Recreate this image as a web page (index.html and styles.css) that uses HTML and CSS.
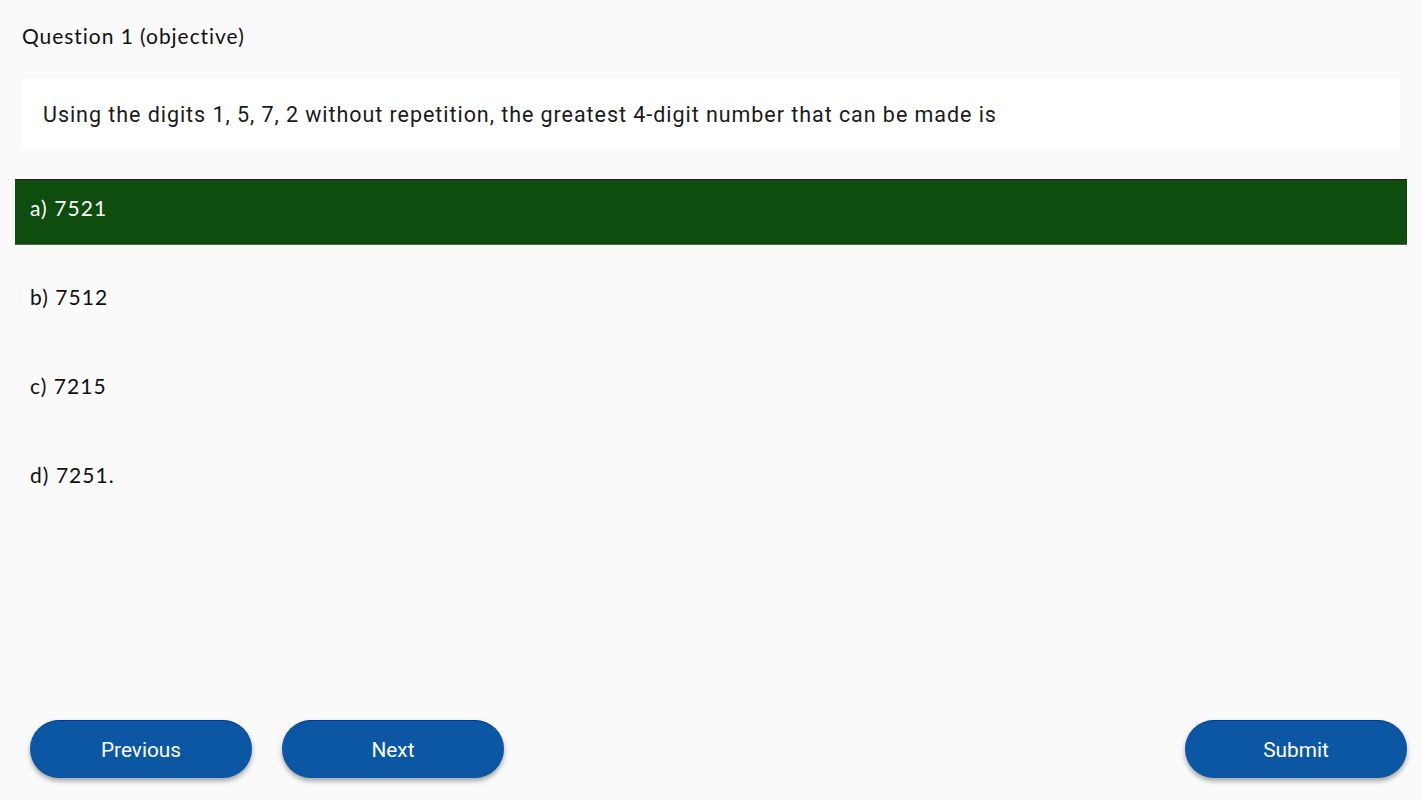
FILE: index.html
```html
<!DOCTYPE html>
<html lang="en">
<head>
<meta charset="utf-8">
<title>Question 1</title>
<link rel="stylesheet" href="styles.css">
</head>
<body>
<div class="page">
  <div class="main">
    <div class="qtitle">Question 1 (objective)</div>
    <div class="qcard">Using the digits 1, 5, 7, 2 without repetition, the greatest 4-digit number that can be made is</div>
    <div class="options">
      <div class="option selected">a) 7521</div>
      <div class="option">b) 7512</div>
      <div class="option">c) 7215</div>
      <div class="option">d) 7251.</div>
    </div>
  </div>
  <div class="actions">
    <div class="nav">
      <button class="btn">Previous</button>
      <button class="btn">Next</button>
    </div>
    <button class="btn">Submit</button>
  </div>
</div>
</body>
</html>
```
FILE: styles.css
```css
html, body {
  margin: 0;
  padding: 0;
  background: #fafafa;
}
.page {
  width: 1422px;
  height: 800px;
  display: flex;
  flex-direction: column;
  justify-content: space-between;
  box-sizing: border-box;
}
.main {
  padding: 0 15px;
}
.qtitle {
  font-family: "Lato", "Noto Sans", sans-serif;
  font-size: 21px;
  color: #111;
  padding: 23px 0 0 7px;
  height: 55px;
  box-sizing: border-box;
  letter-spacing: 0.95px;
}
.qcard {
  margin: 24px 7px 0 7px;
  background: #ffffff;
  height: 70px;
  display: flex;
  align-items: center;
  padding-left: 21px;
  font-family: "Roboto", sans-serif;
  font-size: 21.5px;
  letter-spacing: 0.95px;
  color: #1a1a1a;
}
.options {
  margin-top: 30px;
  display: flex;
  flex-direction: column;
  gap: 23px;
}
.option {
  height: 66px;
  box-sizing: border-box;
  display: flex;
  align-items: center;
  padding: 0 15px 9px 15px;
  font-family: "Lato", "Noto Sans", sans-serif;
  font-size: 21px;
  color: #111;
  letter-spacing: 1.05px;
}
.option.selected {
  background: #0f4d0f;
  color: #ffffff;
  border-top: 1px solid #1d1d1d;
  border-bottom: 1px solid #4a6a4a;
}
.actions {
  display: flex;
  justify-content: space-between;
  align-items: center;
  padding: 0 15px 22px 30px;
}
.nav {
  display: flex;
  gap: 30px;
}
.btn {
  width: 222px;
  height: 58px;
  border: none;
  border-radius: 29px;
  background: #0b57a3;
  color: #ffffff;
  font-family: "Roboto", sans-serif;
  font-size: 20.8px;
  padding-top: 2px;
  box-shadow: 0 3px 5px rgba(0, 0, 0, 0.35);
  border-top: 1px solid #06349a;
  cursor: pointer;
}
```
